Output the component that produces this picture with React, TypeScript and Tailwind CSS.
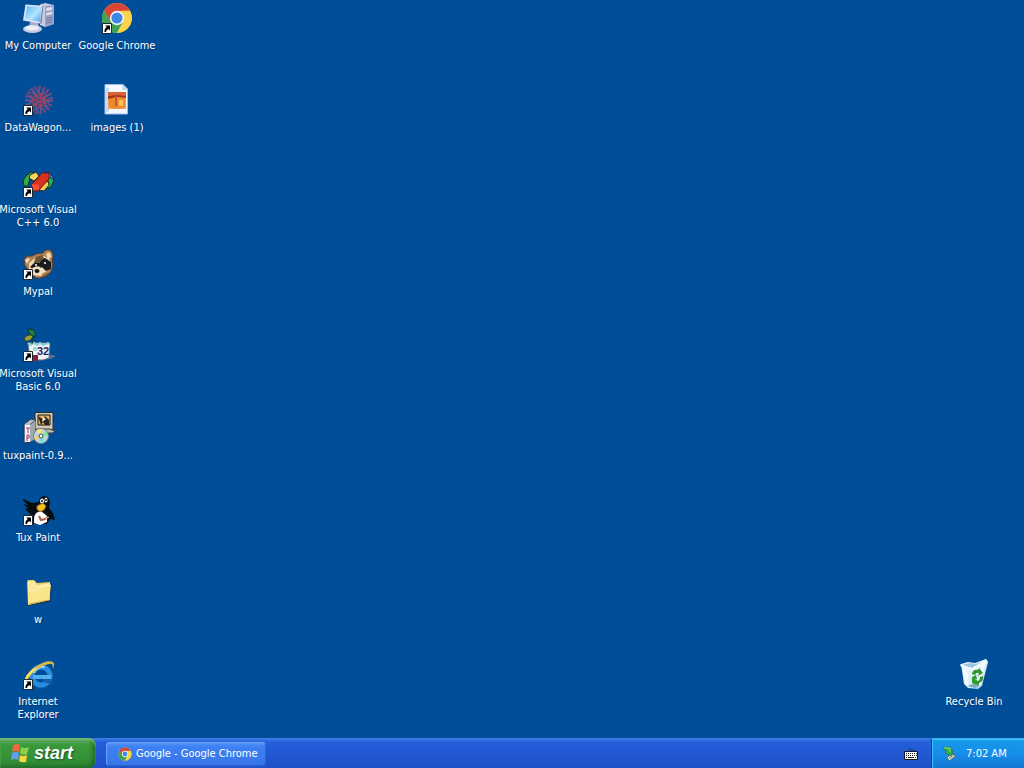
import type { ReactNode } from "react";

function Arrow() {
  return (
    <g>
      <path d="M1.500 21.500h9v10h-9z" fill="#fff" stroke="#20262e" strokeWidth="1" />
      <path d="M4 23.500h5v5L7.500 27Q5 28 5 30H3.500q-.5-3 2.300-4.900z" fill="#000" />
    </g>
  );
}

function Svg({ children, shortcut }: { children: ReactNode; shortcut?: boolean }) {
  return (
    <svg viewBox="0 0 32 32" className="size-8 shrink-0 overflow-visible" aria-hidden="true">
      {children}
      {shortcut && <Arrow />}
    </svg>
  );
}

function ChromeMark() {
  return (
    <g>
      <circle cx="16" cy="16" r="15" fill="#f6cf42" />
      <path d="M16 16 9.500 19.800 3 8.500A15 15 0 0 1 29 8.500L16 9z" fill="#dc4437" />
      <path d="M3 8.500A15 15 0 0 0 16 31l6.200-11.300L16 16 9.600 19.600z" fill="#3fa254" />
      <path d="M16 9h13A15 15 0 0 1 16 31l6.200-11.300z" fill="#f8d34b" />
      <circle cx="16" cy="16" r="7.200" fill="#f5f8fc" />
      <circle cx="16" cy="16" r="5.600" fill="#4285e8" />
    </g>
  );
}

const computer = (
  <Svg>
    <defs>
      <linearGradient id="screen" x1="0" y1="0" x2="1" y2="1">
        <stop offset="0" stopColor="#5cb8f4" />
        <stop offset=".55" stopColor="#b3e4ff" />
        <stop offset="1" stopColor="#4ba0ea" />
      </linearGradient>
    </defs>
    <path d="M18 2.500 23 1l9 2-.3 19L23 25l-5-2z" fill="#c9cde3" />
    <path d="m23 4 9-1-.3 19L23 25z" fill="#9ca0c6" />
    <path d="m24.300 6 6-1v3l-6 1zm0 5 6-1.200v2.400l-6 1.300z" fill="#dcdff0" />
    <path d="m24.500 16.500 6-1.500M24.500 19l6-1.500M24.500 21.500l6-2" stroke="#747aa6" />
    <path d="M8 20h8l1 5H7z" fill="#a7acd0" />
    <ellipse cx="10.500" cy="27" rx="9.500" ry="4" fill="#c7cbe3" />
    <ellipse cx="10" cy="26" rx="7" ry="2.400" fill="#eceef8" />
    <path d="m3.500 2.500 18 1.200-2 18L1 18.500z" fill="#dde3f5" />
    <path d="m5 4.300 14.700 1-1.600 14.400L3 17.300z" fill="url(#screen)" />
    <path d="m20.500 3.700 1 0-2 18-1.400-.3z" fill="#777da5" />
  </Svg>
);

const firework = (
  <Svg shortcut>
    <g fill="none">
      <circle cx="17" cy="16" r="12" stroke="#6f4c82" strokeWidth="4" strokeDasharray="2 2" />
      <circle cx="17" cy="16" r="9" stroke="#5d5795" strokeWidth="3" strokeDasharray="3 2" />
      <circle cx="17" cy="16" r="5.500" stroke="#98445f" strokeWidth="4" strokeDasharray="4 1" />
      <circle cx="17" cy="16" r="2" stroke="#485190" strokeWidth="2" />
      <path d="M17 2v28M3 16h28M7 5l20 22M27 5 7 27M11 3l12 26M23 3 11 29M4 10l26 12M30 10 4 22" stroke="#904462" strokeDasharray="3 2" />
    </g>
  </Svg>
);

const picture = (
  <Svg>
    <path d="M4 .5h18l4.500 4.500v25H4z" fill="#f4f7fe" stroke="#a1bce5" />
    <path d="M21.500 1v5H26z" fill="#bcd3f4" />
    <path d="M4.500 3v26L8 27V4z" fill="#c5daf8" />
    <path d="M7 8h18v17H7z" fill="#f0a15a" />
    <path d="M7 8h18v4H7z" fill="#d96336" />
    <path d="M8 14h16v9q-8 3-16 0z" fill="#ed8a2d" />
    <path d="m7 12 9-1 9 1v2l-9-1-9 2z" fill="#a7351d" />
    <path d="M14 12h2v10h-2z" fill="#c65424" />
    <path d="M18 16h4v6h-4z" fill="#ffc35c" />
  </Svg>
);

const visualC = (
  <Svg shortcut>
    <path d="M1 15q2-6 8-9l5 1-6 5-2 8H2z" fill="#35ad43" stroke="#092d22" />
    <path d="m8 9 6-3 3 4-5 5-5-3z" fill="#f3d45d" stroke="#292c20" />
    <path d="m22 7 4-1 6 6-4 2z" fill="#438ddf" stroke="#14254e" />
    <path d="m28 11 4 3-3 7-5 2-1-3z" fill="#2dad50" stroke="#143822" />
    <path d="m21 17 5-2 1 4-5 6-5-1z" fill="#f4d25a" stroke="#292c20" />
    <path d="M10 18 20 7l7 0v6L17 24v1h-7z" fill="#d8321f" stroke="#631b20" />
    <path d="m10 18 7 1v5h-6z" fill="#f25030" />
  </Svg>
);

const raccoon = (
  <Svg shortcut>
    <path d="M2 11q3-4 8-3 4-3 11-3 2-4 7-3 5 4 2 10 2 8-2 13-6 6-14 5L3 18z" fill="#ad8255" stroke="#523d2c" />
    <path d="M3 12q3-3 5-1l-3 5zM24 6q5-4 5 3l-3 3z" fill="#f3d6b7" />
    <path d="m7 15 6-5 9-2 6 4 1 8-7 5-8-2-7 5z" fill="#eed8b5" />
    <path d="m8 19 5-5 6 1 2 4-8 3zM17 12l6-2 6 4v7l-5 2-5-5z" fill="#191b1e" />
    <path d="m14 9 6-2 2 3-5 5-5-1z" fill="#6e5235" />
    <path d="M9 21q5-4 9-2l4 4-3 5-9-1z" fill="#f3deb9" />
    <ellipse cx="15" cy="23" rx="2.500" ry="2" fill="#171717" />
    <circle cx="14" cy="17" r="1" fill="#fff" />
    <circle cx="23" cy="15" r="1" fill="#fff" />
    <path d="m19 29 9-5q-3 5-9 5" fill="#755138" />
  </Svg>
);

const visualBasic = (
  <Svg shortcut>
    <path d="m22 29 5-4 5 0 1 2-5 2z" fill="#61708b" />
    <path d="M6 13h22l-1 15-6 2H8z" fill="#f3f2f3" stroke="#647491" />
    <path d="m6 13 3 2 3-2 3 2 3-2 3 2 6-2" fill="none" stroke="#8dd0d8" strokeWidth="2" />
    <path d="M11 25h5v6h-5z" fill="#8a203d" />
    <path d="M11 17h4v4h-4z" fill="#a8d8e0" />
    <path d="M10 14Q13 5 7 0" fill="none" stroke="#123b30" />
    <path d="M6-1q7-1 8 7-7 1-8-7" fill="#257c42" stroke="#0b3429" />
    <path d="M2 8q5-5 9-2-2 6-8 5z" fill="#9e9f39" stroke="#244226" />
    <text x="15" y="25" className="font-['Liberation_Sans'] text-[11px] font-bold" fill="#232766">32</text>
  </Svg>
);

const installer = (
  <Svg>
    <path d="M13 .5h18v17H13z" fill="#d4cbb1" stroke="#252b31" />
    <path d="M16 3h12v10H16z" fill="#eab65f" stroke="#161718" />
    <path d="m16 4 5 3 2-3 4 4v5h-4l-2-3-2 3z" fill="#282623" />
    <path d="m21 5 3 2-4 3z" fill="#fff6d9" />
    <path d="M14 17h14l5 2-2 2H14z" fill="#bdb9a8" stroke="#333b43" />
    <path d="m2 12 7-5 5 1-5 4v18l-7 1z" fill="#b7bbc6" stroke="#25334b" />
    <path d="M3 13h5v17H3z" fill="#f5f1f4" />
    <path d="m8 13 5-4v18l-5 3z" fill="#a0a8b2" />
    <path d="M4 16h4m-2 0v5m-1 8v-6h2v3H5" fill="none" stroke="#a13772" strokeWidth="1" />
    <circle cx="19" cy="24" r="7.500" fill="#c5d4d8" stroke="#708087" />
    <path d="m19 24-5-6 5-1z" fill="#fae870" />
    <path d="m19 24 5-5 2 5z" fill="#7de99a" />
    <path d="m19 24 4 5-6 2z" fill="#6ce3e2" />
    <path d="m19 24-7 1 2 4z" fill="#e9d36c" />
    <circle cx="19" cy="24" r="2" fill="#fff" stroke="#384a57" />
  </Svg>
);

const penguin = (
  <Svg shortcut>
    <path d="m1 5 9 4 7-1q0-5 5-6 5 0 6 6l-1 6 4 5 2 7-5-1-3 5H11L9 21 3 15l3-1-5-4 5 1-5-5z" fill="#080d12" />
    <path d="M12 25q0-7 7-8l6 5v6l-7 3-6-2z" fill="#fff" />
    <ellipse cx="20" cy="7" rx="2" ry="2.500" fill="#fff" />
    <ellipse cx="24" cy="6" rx="1.500" ry="2.500" fill="#fff" />
    <circle cx="20" cy="7" r="1" fill="#101010" />
    <circle cx="24" cy="6" r="1" fill="#101010" />
    <path d="m15 12 6-3 3 3-2 4q-5 3-7-1z" fill="#f3bd22" stroke="#9f651a" />
    <path d="m17 22 2 4 4-1 3-2" fill="none" stroke="#b25e4b" strokeWidth="2" />
    <path d="m23 25 4-2" stroke="#edbb9c" />
  </Svg>
);

const folder = (
  <Svg>
    <path d="m27 7 3 1-2 18-22 4-1-3z" fill="#143657" />
    <path d="m5 6 1-2h6l3 3 13-1v18L6 29z" fill="#eec95e" />
    <path d="m6 5 6 0 3 4 13-2v3L6 15z" fill="#fae8a1" />
    <path d="m6 15 8-1 4-3 11-2-2 15L6 29z" fill="#f9e58b" />
    <path d="m6 15 8-1 4-3 11-2" fill="none" stroke="#fff5bd" />
    <path d="m7 28 20-4" stroke="#d2a540" />
  </Svg>
);

const explorer = (
  <Svg shortcut>
    <circle cx="19" cy="18" r="9" fill="none" stroke="#288bdd" strokeWidth="5" />
    <path d="M11 19h18" stroke="#51afed" strokeWidth="4" />
    <path d="m21 21 10 0-2 5-8-2z" fill="#125dac" />
    <path d="M12 15q3-7 11-6" fill="none" stroke="#8bd3fa" strokeWidth="2" />
    <path d="M3 27Q1 17 13 9 25 1 31 4q2 2 0 7 0-6-3-5-6 0-14 6-9 8-10 15" fill="#d8b946" />
    <path d="M3 24Q4 17 14 10" fill="none" stroke="#f9e36d" strokeWidth="2" />
  </Svg>
);

const recycle = (
  <Svg>
    <defs>
      <linearGradient id="bin" x1="0" y1="0" x2="1" y2="1">
        <stop offset="0" stopColor="#f1faff" />
        <stop offset=".65" stopColor="#d4e9f3" />
        <stop offset="1" stopColor="#87b7d2" />
      </linearGradient>
    </defs>
    <path d="m3 6 7-2 7 1 11-4 2 3-6 24-4 3-10-1-4-4z" fill="url(#bin)" />
    <path d="m4 7 8-2 6 1 10-4-3 5-11 3z" fill="#9bc5dc" />
    <path d="m2 6 12 4 14-9 2 3-6 5-10 3-11-3z" fill="#f0faff" />
    <path d="m5 9 2 17 4 3-1-14zM27 6l-4 21-5 3 4-17z" fill="#f5fbff" />
    <path d="m9 28 6-2 7 1-4 3z" fill="#79abc7" />
    <path d="M14 16q1-5 6-4l1-2 4 5-5 3 1-3q-3-1-4 2zM25 18q1 5-4 7l0 2-6-1 3-5 1 2q3 0 3-4z" fill="#31952d" />
    <path d="m14 19 4-2 1 4h-2l2 3v2l-5-1z" fill="#319b30" />
  </Svg>
);

type Item = { label: string; lines: string[]; icon: ReactNode };

const items: Item[] = [
  { label: "My Computer", lines: ["My Computer"], icon: computer },
  { label: "DataWagon", lines: ["DataWagon..."], icon: firework },
  { label: "Microsoft Visual C++ 6.0", lines: ["Microsoft Visual", "C++ 6.0"], icon: visualC },
  { label: "Mypal", lines: ["Mypal"], icon: raccoon },
  { label: "Microsoft Visual Basic 6.0", lines: ["Microsoft Visual", "Basic 6.0"], icon: visualBasic },
  { label: "tuxpaint-0.9", lines: ["tuxpaint-0.9..."], icon: installer },
  { label: "Tux Paint", lines: ["Tux Paint"], icon: penguin },
  { label: "w", lines: ["w"], icon: folder },
  { label: "Internet Explorer", lines: ["Internet", "Explorer"], icon: explorer },
  { label: "Google Chrome", lines: ["Google Chrome"], icon: <Svg shortcut><ChromeMark /></Svg> },
  { label: "images (1)", lines: ["images (1)"], icon: picture },
];

function DesktopIcon({ label, lines, icon }: Item) {
  return (
    <button type="button" aria-label={label} className="flex flex-col items-center gap-[5px] pt-0.5 text-[11px] leading-[13px] text-white">
      {icon}
      <span className="flex flex-col items-center whitespace-nowrap [text-shadow:1px_1px_1px_#00397c]">
        {lines.map((line) => <span key={line}>{line}</span>)}
      </span>
    </button>
  );
}

function WindowsFlag() {
  return (
    <svg viewBox="0 0 20 20" className="size-5" aria-hidden="true">
      <path d="M3 2q4-2 7 0L9 9Q6 7 2 9z" fill="#ee6840" />
      <path d="M11 4q4 2 8 0l-2 7q-4 2-7-1z" fill="#8bd34b" />
      <path d="M2 10q4-2 7 0l-1 7q-3-2-7 0z" fill="#659df0" />
      <path d="M10 12q3 2 7 0l-1 7q-4 1-7-1z" fill="#f8d642" />
    </svg>
  );
}

export default function App() {
  return (
    <div className="flex min-h-screen flex-col bg-[#004e98] font-['DejaVu_Sans_Condensed','DejaVu_Sans',sans-serif] select-none">
      <main className="flex flex-1 items-start justify-between">
        <div className="grid auto-cols-[76px] grid-flow-col grid-rows-[repeat(9,82px)] gap-x-[3px]">
          {items.map((item) => <DesktopIcon key={item.label} {...item} />)}
        </div>
        <div className="grid grid-cols-[76px] grid-rows-[82px] self-end pr-3">
          <DesktopIcon label="Recycle Bin" lines={["Recycle Bin"]} icon={recycle} />
        </div>
      </main>

      <footer className="flex h-[30px] items-stretch bg-linear-to-b from-[#3a7be4] via-[#245edb] via-15% to-[#1f51c8] text-[11px] text-white">
        <button
          type="button"
          className="flex w-24 items-center gap-1 rounded-r-lg bg-linear-to-b from-[#66a767] via-[#399a3b] via-25% to-[#2f8a31] pl-2.5 shadow-[inset_0_2px_2px_#75b978,inset_-3px_-2px_4px_#1c6a2a]"
        >
          <WindowsFlag />
          <span className="font-['Liberation_Sans',sans-serif] text-lg leading-5 font-bold italic [text-shadow:1px_1px_2px_#17501c]">start</span>
        </button>
        <div className="flex flex-1 items-center border-t border-[#3d80ec] pl-2.5">
          <button
            type="button"
            className="flex h-6 w-40 items-center gap-1 rounded-sm bg-linear-to-b from-[#5a98f8] via-[#3d80f3] via-20% to-[#3876e8] pt-px pl-3 whitespace-nowrap shadow-[inset_1px_1px_1px_#69a3fa,inset_-1px_-1px_1px_#2e64d0]"
          >
            <svg viewBox="0 0 32 32" className="size-3.5 shrink-0" aria-hidden="true"><ChromeMark /></svg>
            Google - Google Chrome
          </button>
        </div>
        <button type="button" aria-label="On-screen keyboard" className="flex items-center border-t border-[#3d80ec] pr-3">
          <svg viewBox="0 0 16 16" className="size-4" aria-hidden="true">
            <path d="M5 3q2-1 3 1t4-1" fill="none" stroke="#173568" />
            <path d="M1.500 5.500h13v8h-13z" fill="#f8f8ef" stroke="#111a2e" />
            <path d="M3 7.500h11M3 9.500h11" stroke="#222" strokeDasharray="1 1" />
            <path d="M3 11.500h1m1 0h6m1 0h1" stroke="#222" />
          </svg>
        </button>
        <div className="flex w-[93px] items-center gap-2 border-t border-l border-t-[#35b5f5] border-l-[#123f9c] bg-linear-to-b from-[#1799e9] via-[#168eea] to-[#1279d2] pl-2.5 whitespace-nowrap shadow-[inset_1px_1px_1px_#3cc0fc]">
          <svg viewBox="0 0 16 16" className="size-4 shrink-0" aria-hidden="true">
            <path d="m5 11 5-3 4 2-7 5z" fill="#e4e9e2" stroke="#536b6c" />
            <path d="m7 12 4-2" stroke="#687a75" />
            <path d="m1 2 8-1v4l2 0-2 5-6-3 1-2z" fill="#34ad4a" stroke="#278050" />
            <path d="m2 2 6 0v4" fill="none" stroke="#94e678" />
          </svg>
          <time className="pt-px">7:02 AM</time>
        </div>
      </footer>
    </div>
  );
}
